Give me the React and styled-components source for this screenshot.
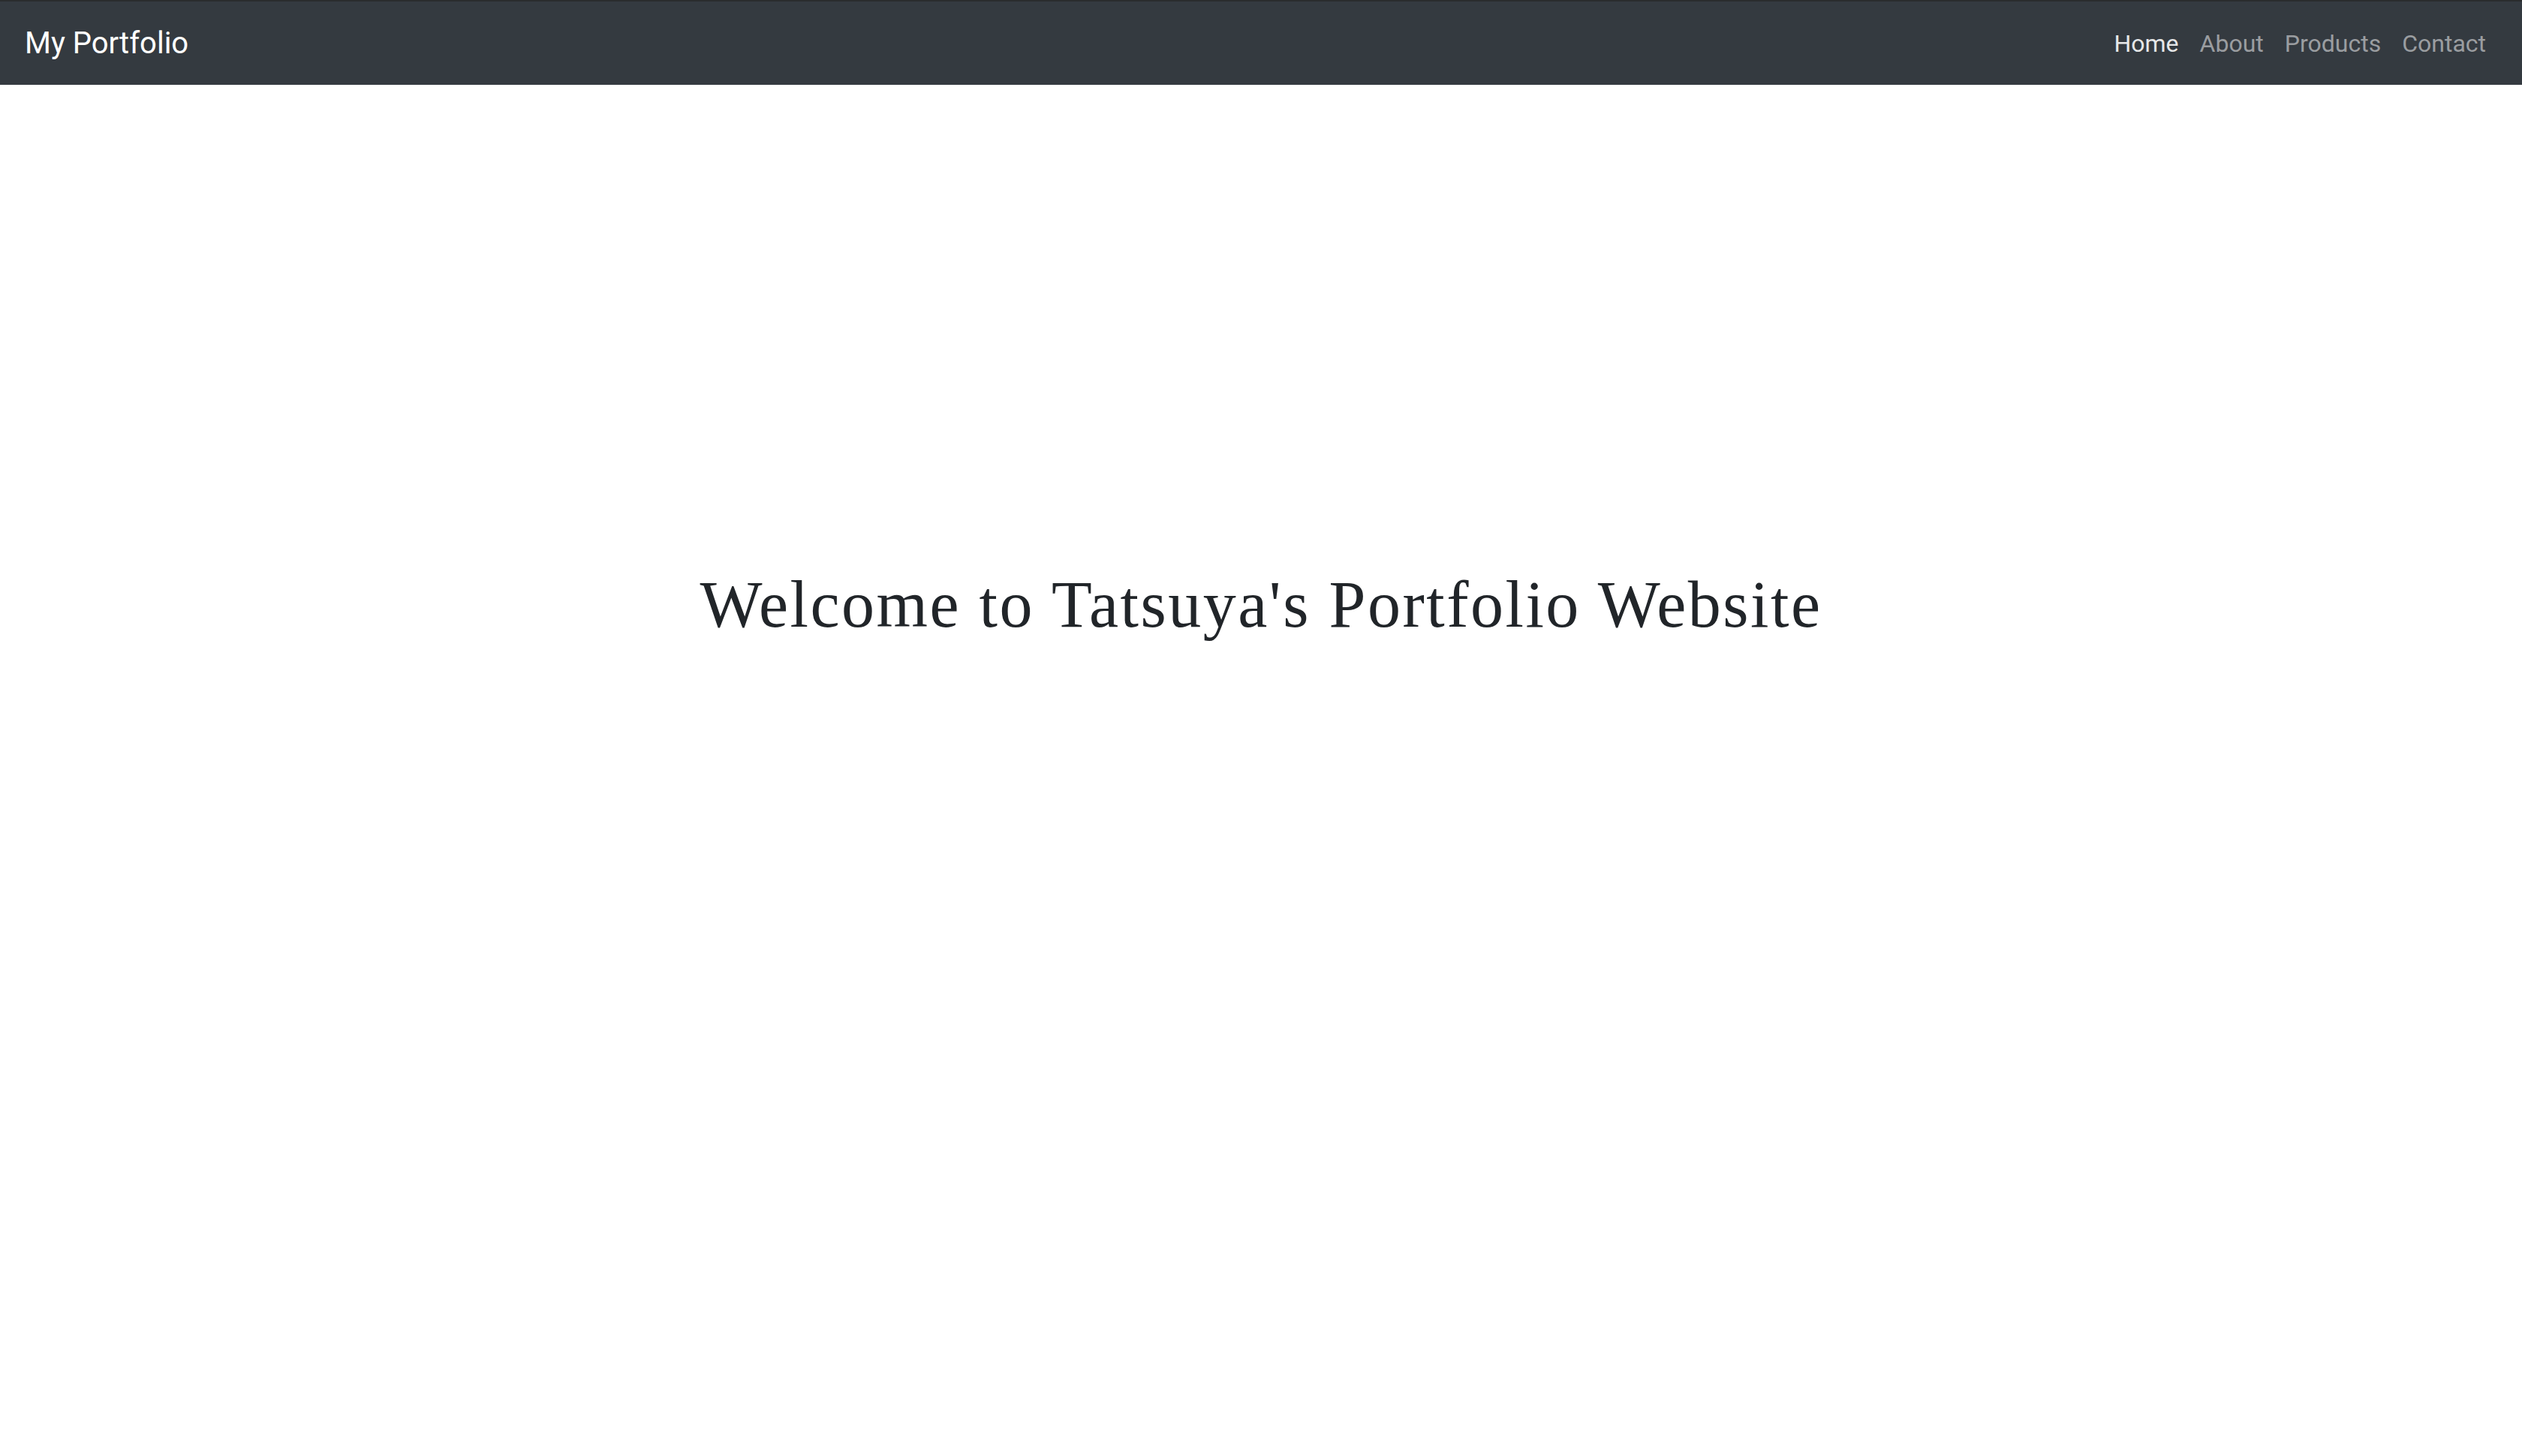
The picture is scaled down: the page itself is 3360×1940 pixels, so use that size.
import React from "react";
import styled, { createGlobalStyle } from "styled-components";

const Global = createGlobalStyle`
  html, body { margin: 0; padding: 0; background: #fff; }
  body { font-family: Roboto, "Liberation Sans", sans-serif; color: #212529; }
  * { box-sizing: border-box; }
`;

const Navbar = styled.nav`
  display: flex;
  align-items: center;
  justify-content: space-between;
  height: 113px;
  padding: 0 48px 0 33px;
  background: #343a40;
  border-top: 2px solid #2a2c2e;
`;

const Brand = styled.a`
  font-size: 40px;
  line-height: 60px;
  color: #fff;
  text-decoration: none;
  font-family: Roboto, "Liberation Sans", sans-serif;
`;

const NavList = styled.ul`
  display: flex;
  gap: 28px;
  list-style: none;
  margin: 0;
  padding: 0;
`;

const NavLink = styled.a`
  font-size: 32px;
  line-height: 48px;
  text-decoration: none;
  color: ${(p) => (p.$active ? "#e6e7e8" : "#9a9da0")};
`;

const Main = styled.main`
  display: flex;
  justify-content: center;
  padding-top: 640px;
`;

const Title = styled.h1`
  margin: 0;
  font-family: "Liberation Serif", "DejaVu Serif", serif;
  font-weight: 400;
  font-size: 88px;
  letter-spacing: 2.5px;
  line-height: 1.2;
  color: #212529;
`;

export default function App() {
  return (
    <>
      <Global />
      <Navbar>
        <Brand href="#">My Portfolio</Brand>
        <NavList>
          <li><NavLink $active href="#">Home</NavLink></li>
          <li><NavLink href="#">About</NavLink></li>
          <li><NavLink href="#">Products</NavLink></li>
          <li><NavLink href="#">Contact</NavLink></li>
        </NavList>
      </Navbar>
      <Main>
        <Title>Welcome to Tatsuya's Portfolio Website</Title>
      </Main>
    </>
  );
}
